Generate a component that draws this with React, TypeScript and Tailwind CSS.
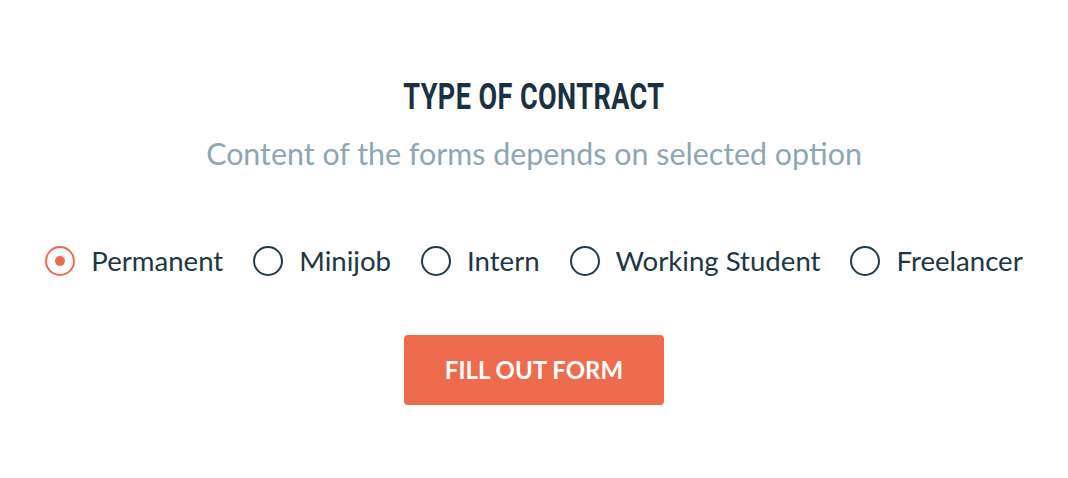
import React, { useState } from "react";

const options = ["Permanent", "Minijob", "Intern", "Working Student", "Freelancer"];

export default function App() {
  const [selected, setSelected] = useState("Permanent");
  return (
    <div className="w-[1068px] h-[478px] bg-white flex flex-col items-center pt-[78px] font-['Lato',sans-serif]">
      <h1 className="font-['Roboto',sans-serif] font-bold text-[37px] leading-[37px] text-[#1b3142] uppercase tracking-[0.6px] scale-x-[0.73] whitespace-nowrap">
        Type of Contract
      </h1>
      <p className="mt-[20px] text-[30.4px] leading-[36px] text-[#8fa6b3] whitespace-nowrap">
        Content of the forms depends on selected option
      </p>
      <div className="mt-[75px] flex items-center gap-[30px]">
        {options.map((o) => {
          const active = o === selected;
          return (
            <label
              key={o}
              className="flex items-center gap-[16px] cursor-pointer"
              onClick={() => setSelected(o)}
            >
              <span
                className={`w-[30px] h-[30px] rounded-full border-2 flex items-center justify-center ${
                  active ? "border-[#ee6c4d]" : "border-[#1f3a4a]"
                }`}
              >
                {active && <span className="w-[10px] h-[10px] rounded-full bg-[#ee6c4d]" />}
              </span>
              <span className="text-[27.6px] leading-[30px] text-[#1d3646] whitespace-nowrap">{o}</span>
            </label>
          );
        })}
      </div>
      <button className="mt-[59px] w-[260px] h-[70px] rounded-[4px] bg-[#ee6c4d] text-white font-bold text-[24px] uppercase">
        Fill out form
      </button>
    </div>
  );
}
